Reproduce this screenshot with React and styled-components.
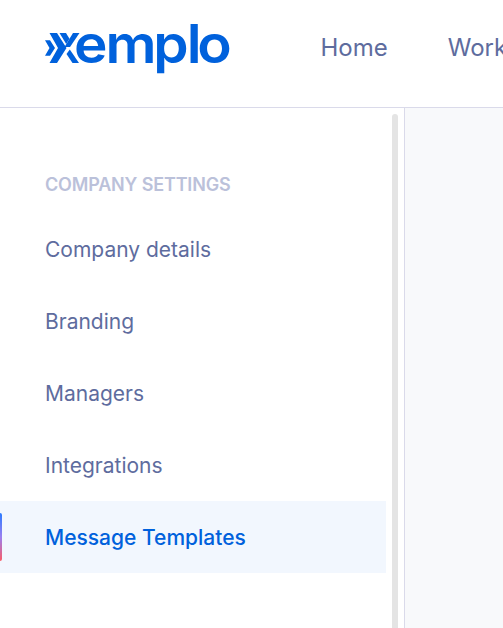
import React from "react";
import styled, { createGlobalStyle } from "styled-components";

const GlobalStyle = createGlobalStyle`
* {
  box-sizing: border-box;
}

body {
  margin: 0;
  overflow: hidden;
  background: #fff;
  font-family: Inter, "Liberation Sans", sans-serif;
}
`

const Page = styled.div`
display: flex;
flex-flow: column;
width: 100vw;
height: 100vh;
overflow: hidden;
`

const Header = styled.header`
display: flex;
flex: none;
align-items: flex-start;
height: 108px;
padding-left: 45px;
border-bottom: 1px solid #dadaea;
`

const Logo = styled.svg`
display: block;
flex: none;
width: 188px;
height: 64px;
margin-top: 20px;
overflow: visible;
fill: #0061dc;

text {
  font-family: Inter, sans-serif;
  font-size: 53px;
  font-weight: 600;
}
`

const Nav = styled.nav`
display: flex;
gap: 60px;
margin: 33px 0 0 87.5px;
`

const NavLink = styled.a`
font-size: 24px;
line-height: 30px;
color: #5e6c9e;
white-space: nowrap;
`

const Body = styled.div`
display: flex;
flex: 1;
min-height: 0;
`

const Sidebar = styled.aside`
display: flex;
flex: none;
width: 405px;
border-right: 1px solid #dadaea;
`

const Menu = styled.div`
width: 386px;
padding-top: 65px;
`

const MenuTitle = styled.h3`
margin: 0 0 16px;
padding-left: 45px;
font-size: 18px;
font-weight: 600;
letter-spacing: -0.17px;
line-height: 24px;
color: #bbc1da;
`

const MenuItem = styled.div`
display: flex;
align-items: center;
height: 72px;
font-size: 21px;
font-weight: ${(props) => (props.$active ? 500 : 400)};
color: ${(props) => (props.$active ? "#0061dc" : "#5e6c9e")};
background: ${(props) => (props.$active ? "#f2f7fe" : "transparent")};
`

const Marker = styled.span`
width: 2px;
height: 48px;
margin-right: 43px;
border-radius: 0 2px 2px 0;
background: ${(props) => (props.$active ? "linear-gradient(#2b7bff, #9a80f0 50%, #fb5c66)" : "transparent")};
`

const ScrollBar = styled.div`
width: 6px;
margin: 6px 0 0 6px;
border-radius: 3px 3px 0 0;
background: #e4e4e4;
`

const Content = styled.main`
flex: 1;
background: #f8f9fb;
`

const items = ["Company details", "Branding", "Managers", "Integrations", "Message Templates"];

export default function App() {
  const active = "Message Templates";

  return (
    <Page>
      <GlobalStyle />
      <Header>
        <Logo viewBox="0 0 188 64" role="img" aria-label="xemplo">
          <path d="M0 20.3H5L10 28L5 35.8H0L4.5 28Z" />
          <path d="M4.5 13H12L21.5 28L12 43H4.5L13 28Z" />
          <path d="M14.5 13H21L24.5 18.8L21.2 24Z" />
          <path d="M28 13H34.5L25 27H19.5Z" />
          <path d="M24.8 29.5L34 43H27.5L21.5 34Z" />
          <text transform="scale(1.07 1)" x="27.2 56.6 101.2 132.4 142.2" y="43">emplo</text>
        </Logo>
        <Nav>
          <NavLink>Home</NavLink>
          <NavLink>Work</NavLink>
        </Nav>
      </Header>
      <Body>
        <Sidebar>
          <Menu>
            <MenuTitle>COMPANY SETTINGS</MenuTitle>
            {items.map((item) => (
              <MenuItem key={item} $active={item === active}>
                <Marker $active={item === active} />
                {item}
              </MenuItem>
            ))}
          </Menu>
          <ScrollBar />
        </Sidebar>
        <Content />
      </Body>
    </Page>
  )
}
